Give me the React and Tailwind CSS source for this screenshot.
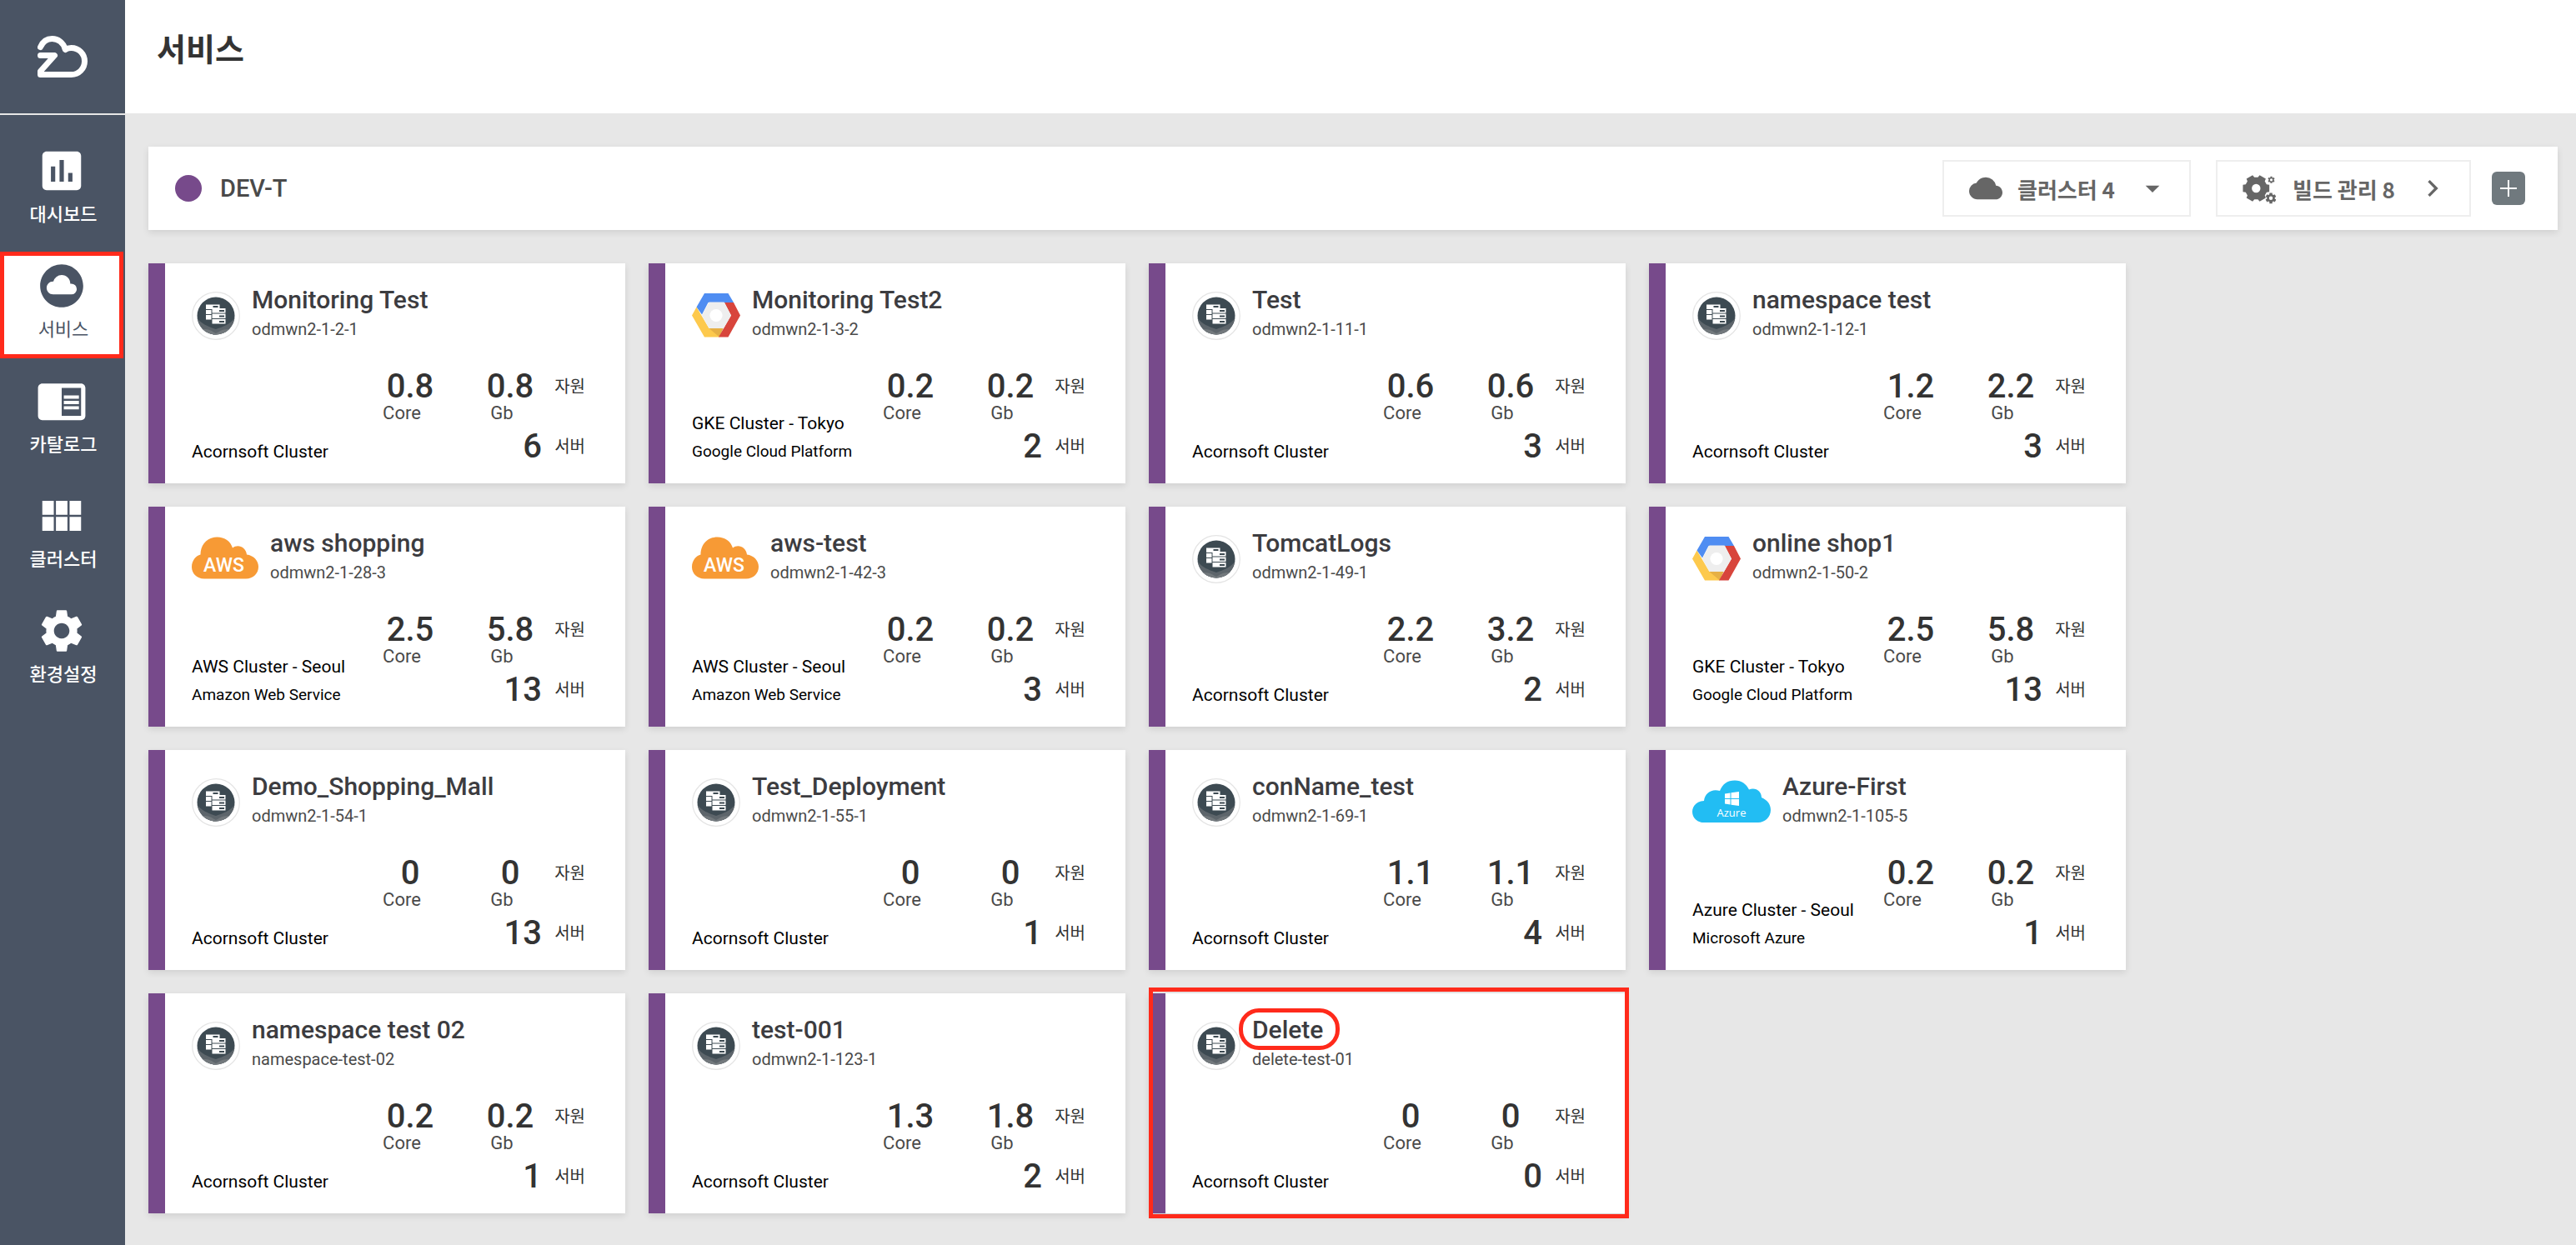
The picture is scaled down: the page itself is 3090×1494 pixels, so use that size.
import React from "react";
import {
  MdAssessment,
  MdCloudCircle,
  MdChromeReaderMode,
  MdViewModule,
  MdSettings,
  MdCloud,
  MdArrowDropDown,
  MdChevronRight,
} from "react-icons/md";

const menu = [
  { label: "대시보드", Icon: MdAssessment },
  { label: "서비스", Icon: MdCloudCircle, active: true },
  { label: "카탈로그", Icon: MdChromeReaderMode },
  { label: "클러스터", Icon: MdViewModule },
  { label: "환경설정", Icon: MdSettings },
];

const acorn = ["Acornsoft Cluster"];
const gke = ["GKE Cluster - Tokyo", "Google Cloud Platform"];
const aws = ["AWS Cluster - Seoul", "Amazon Web Service"];
const azure = ["Azure Cluster - Seoul", "Microsoft Azure"];

const services = [
  { name: "Monitoring Test", id: "odmwn2-1-2-1", kind: "server", cluster: acorn, core: "0.8", gb: "0.8", servers: 6 },
  { name: "Monitoring Test2", id: "odmwn2-1-3-2", kind: "gcp", cluster: gke, core: "0.2", gb: "0.2", servers: 2 },
  { name: "Test", id: "odmwn2-1-11-1", kind: "server", cluster: acorn, core: "0.6", gb: "0.6", servers: 3 },
  { name: "namespace test", id: "odmwn2-1-12-1", kind: "server", cluster: acorn, core: "1.2", gb: "2.2", servers: 3 },
  { name: "aws shopping", id: "odmwn2-1-28-3", kind: "aws", cluster: aws, core: "2.5", gb: "5.8", servers: 13 },
  { name: "aws-test", id: "odmwn2-1-42-3", kind: "aws", cluster: aws, core: "0.2", gb: "0.2", servers: 3 },
  { name: "TomcatLogs", id: "odmwn2-1-49-1", kind: "server", cluster: acorn, core: "2.2", gb: "3.2", servers: 2 },
  { name: "online shop1", id: "odmwn2-1-50-2", kind: "gcp", cluster: gke, core: "2.5", gb: "5.8", servers: 13 },
  { name: "Demo_Shopping_Mall", id: "odmwn2-1-54-1", kind: "server", cluster: acorn, core: "0", gb: "0", servers: 13 },
  { name: "Test_Deployment", id: "odmwn2-1-55-1", kind: "server", cluster: acorn, core: "0", gb: "0", servers: 1 },
  { name: "conName_test", id: "odmwn2-1-69-1", kind: "server", cluster: acorn, core: "1.1", gb: "1.1", servers: 4 },
  { name: "Azure-First", id: "odmwn2-1-105-5", kind: "azure", cluster: azure, core: "0.2", gb: "0.2", servers: 1 },
  { name: "namespace test 02", id: "namespace-test-02", kind: "server", cluster: acorn, core: "0.2", gb: "0.2", servers: 1 },
  { name: "test-001", id: "odmwn2-1-123-1", kind: "server", cluster: acorn, core: "1.3", gb: "1.8", servers: 2 },
  { name: "Delete", id: "delete-test-01", kind: "server", cluster: acorn, core: "0", gb: "0", servers: 0, marked: true },
];

function Logo() {
  return (
    <svg viewBox="0 0 60 50" className="h-[50px] w-[60px]" fill="none" stroke="#fff" strokeWidth="7" strokeLinecap="round" strokeLinejoin="round" aria-hidden="true">
      <path d="M3.500 13.500C6 7.500 11 3.500 17.500 3.500C25 3.500 31 8.500 33 15.500" />
      <path d="M33.500 16.500C35.500 15 38 14.500 40.500 14.500C49.500 14.500 56.500 21.500 56.500 30.500C56.500 39.500 49.500 46.500 40.500 46.500H3.500V42.500L20.500 23.500H3.500" />
    </svg>
  );
}

function ServerIcon() {
  return (
    <svg viewBox="0 0 58 58" className="size-[58px]" aria-hidden="true">
      <defs>
        <clipPath id="disc">
          <circle cx="29" cy="29" r="22.500" />
        </clipPath>
      </defs>
      <circle cx="29" cy="29" r="28.300" fill="#fff" stroke="#e4e4e4" strokeWidth="1.200" />
      <g clipPath="url(#disc)">
        <rect width="58" height="58" fill="#3d4a52" />
        <path d="M6 31C12 39 20 42 29 45C38 42 46 39 52 31V58H6Z" fill="#5d656b" />
        <path d="M14 45C22 45 25 48 29 50C33 48 36 45 44 45V58H14Z" fill="#73797d" />
      </g>
      <g fill="#fff">
        <rect x="17" y="15.500" width="16.500" height="5.500" />
        <rect x="17" y="22" width="6.500" height="5" />
        <rect x="17" y="28" width="6.500" height="5.500" />
        <rect x="24.500" y="20" width="16" height="5.500" />
        <rect x="24.500" y="26.500" width="16" height="5.500" />
        <rect x="24.500" y="33" width="16" height="5.500" />
      </g>
      <g fill="#3d4a52">
        <rect x="25.500" y="17" width="6" height="2" />
        <rect x="33" y="22" width="6" height="2" />
        <rect x="33" y="28.500" width="6" height="2" />
        <rect x="33" y="35" width="6" height="2" />
      </g>
    </svg>
  );
}

function GcpIcon() {
  return (
    <svg viewBox="0 0 58 58" className="size-[58px]" aria-hidden="true">
      <path d="M15 2H43.500L50 13H19.500L12 27.500L5.500 18.500Z" fill="#4f8df2" />
      <path d="M5.500 18.500L20.500 44H37L32.500 54.500H15L0 28.500Z" fill="#fdc94d" />
      <path d="M20.500 44H37.500L33 54.500Z" fill="#e6b045" />
      <path d="M39 13H50L58 28.500L43.500 54.500H32L47 28.500Z" fill="#d8453c" />
      <path d="M20.500 12.500H38.500L47 28.500L38 44H20.500L12 28.500Z" fill="#eeeeee" />
      <circle cx="29" cy="28.500" r="7.600" fill="#fff" />
    </svg>
  );
}

function AwsIcon() {
  return (
    <svg viewBox="0 0 80 58" className="h-[58px] w-[80px]" aria-hidden="true">
      <path d="M15 52.500C6 52.500 0 46 0 38.500C0 30.500 5 25 10.500 23.500C10.500 11 19 2.500 30.500 2.500C39.500 2.500 46.500 7.500 49 15.500C55 10.500 65 14 66 23.500C74 24.500 80 30.500 80 38C80 46 74 52.500 65 52.500Z" fill="#f79a35" />
      <text x="38.500" y="44" textAnchor="middle" fontFamily="Roboto, sans-serif" fontWeight="500" fontSize="23" fill="#fff">AWS</text>
    </svg>
  );
}

function AzureIcon() {
  return (
    <svg viewBox="0 0 94 58" className="h-[58px] w-[94px]" aria-hidden="true">
      <path d="M14 53C6 53 0 47.500 0 40C0 32.500 6 27.500 14 27C15 17 24 12 33 15C36 7 42 2.500 51 2.500C59 2.500 65 7 68 13.500C76 10.500 83 15.500 83 23C90 26 94 31 94 38C94 46.500 87 53 79 53Z" fill="#22bdf3" />
      <g fill="#fff">
        <path d="M39 18.500L45.500 17.500V24H39Z" />
        <path d="M46.500 17.300L56 16V24H46.500Z" />
        <path d="M39 25H45.500V31.500L39 30.500Z" />
        <path d="M46.500 25H56V33L46.500 31.700Z" />
      </g>
      <text x="47" y="46" textAnchor="middle" fontFamily="Open Sans, sans-serif" fontSize="13" fill="#fff">Azure</text>
    </svg>
  );
}

const kindIcons = { server: ServerIcon, gcp: GcpIcon, aws: AwsIcon, azure: AzureIcon };

/* Outline of a six-toothed wheel with a round hole */
function wheel(cx, cy, outer, inner, hole, turn) {
  const points = [];
  for (let i = 0; i < 6; i += 1) {
    const base = turn + i * 60;
    [[-21, inner], [-15, outer], [15, outer], [21, inner]].forEach(([offset, radius]) => {
      const angle = ((base + offset) * Math.PI) / 180;
      points.push(`${(cx + radius * Math.cos(angle)).toFixed(2)} ${(cy + radius * Math.sin(angle)).toFixed(2)}`);
    });
  }
  return `M${points.join("L")}ZM${cx - hole} ${cy}a${hole} ${hole} 0 1 0 ${hole * 2} 0a${hole} ${hole} 0 1 0 ${-hole * 2} 0Z`;
}

function GearsIcon() {
  return (
    <svg viewBox="0 0 40 40" className="size-10 shrink-0" fill="currentColor" fillRule="evenodd" aria-hidden="true">
      <path d={wheel(16.3, 20, 16.4, 13.4, 5.2, 0)} />
      <path d={wheel(34.5, 9.8, 4.2, 3.1, 1.6, 30)} />
      <path d={wheel(34, 31.8, 6.6, 4.8, 2.2, 30)} />
    </svg>
  );
}

function Sidebar() {
  return (
    <aside className="flex w-[150px] shrink-0 flex-col bg-[#4a5464]">
      <a href="#home" aria-label="Home" className="flex h-[138px] items-center justify-center border-b-2 border-[#e7e7e7]">
        <Logo />
      </a>
      <nav className="mr-0.5 mt-[26px] flex flex-col gap-2.5">
        {menu.map(({ label, Icon, active }) => (
          <a
            key={label}
            href={`#${label}`}
            aria-current={active ? "page" : undefined}
            className={
              active
                ? "relative flex h-32 flex-col items-center bg-white pt-2.5 text-[#4a5464]"
                : "flex h-32 flex-col items-center pt-2.5 font-medium text-white"
            }
          >
            <Icon className="size-[62px]" />
            <span className="mt-1.5 pl-1 text-[22px] leading-8">{label}</span>
            {active && <span className="pointer-events-none absolute inset-0 border-5 border-[#ff2a1b]" />}
          </a>
        ))}
      </nav>
    </aside>
  );
}

function Toolbar() {
  return (
    <section className="flex h-[100px] items-center bg-white pl-8 pr-[39px] shadow-[0_3px_8px_rgba(0,0,0,0.1)]">
      <span className="size-8 rounded-full bg-[#774a8b]" />
      <h2 className="ml-[22px] flex-1 text-[29px] font-medium leading-9 text-[#4a4a4a]">DEV-T</h2>
      <div className="flex items-center font-['Noto_Sans_CJK_KR',sans-serif] text-[26px] font-bold text-[#666]">
        <label className="flex h-[68px] w-[298px] items-center border-2 border-[#eee] pl-[30px] pr-6">
          <MdCloud className="size-10 shrink-0" />
          <select aria-label="클러스터" className="ml-[18px] min-w-0 flex-1 appearance-none bg-transparent">
            <option>클러스터 4</option>
          </select>
          <MdArrowDropDown className="size-10 shrink-0" />
        </label>
        <button type="button" className="ml-[30px] flex h-[68px] w-[306px] items-center border-2 border-[#eee] pl-[30px] pr-6">
          <GearsIcon />
          <span className="ml-5 flex-1 text-left">빌드 관리 8</span>
          <MdChevronRight className="size-10 shrink-0" />
        </button>
        <button type="button" aria-label="추가" className="ml-[25px] flex size-10 items-center justify-center rounded-md bg-[#70797e]">
          <svg viewBox="0 0 20 20" className="size-5" stroke="#fff" strokeWidth="2" aria-hidden="true">
            <path d="M10 0V20M0 10H20" />
          </svg>
        </button>
      </div>
    </section>
  );
}

function ServiceCard({ service }) {
  const Icon = kindIcons[service.kind];
  return (
    <article className="relative border-l-20 border-[#774a8b] bg-white pb-6 pl-8 pr-12 pt-[26px] shadow-[0_3px_8px_rgba(0,0,0,0.1)]">
      <header className="flex items-end gap-3.5">
        <Icon />
        <div>
          <h3 className="relative w-fit text-[30px] font-medium leading-9 text-[#3c3c40]">
            {service.name}
            {service.marked && (
              <span className="pointer-events-none absolute -bottom-1.5 -left-4 -right-5 -top-2 rounded-[24px] border-5 border-[#ff2a1b]" />
            )}
          </h3>
          <p className="mt-1 text-[20px] leading-[26px] text-[#4a4a4a]">{service.id}</p>
        </div>
      </header>
      <div className="mt-9 flex items-end justify-between">
        <div className="flex w-0 flex-col gap-1.5 whitespace-nowrap text-[21px] leading-7 text-black">
          <p>{service.cluster[0]}</p>
          {service.cluster[1] && <p className="text-[19px]">{service.cluster[1]}</p>}
        </div>
        <dl className="grid grid-cols-[120px_120px_40px] text-[#333]">
          <dd className="pl-5 text-center text-[40px] font-medium leading-10">{service.core}</dd>
          <dd className="pl-5 text-center text-[40px] font-medium leading-10">{service.gb}</dd>
          <dt className="row-span-2 text-right text-[20px] leading-10">자원</dt>
          <dd className="text-center text-[22px] leading-6 text-[#4a4a4a]">Core</dd>
          <dd className="text-center text-[22px] leading-6 text-[#4a4a4a]">Gb</dd>
          <dd className="col-span-2 pr-3 pt-2 text-right text-[40px] font-medium leading-10">{service.servers}</dd>
          <dt className="pt-2 text-right text-[20px] leading-10">서버</dt>
        </dl>
      </div>
      {service.marked && (
        <span className="pointer-events-none absolute -bottom-1.5 -left-5 -right-1 -top-[7px] border-5 border-[#ff2a1b]" />
      )}
    </article>
  );
}

export default function App() {
  return (
    <div className="flex min-h-screen bg-[#e7e7e7] font-['Roboto','Noto_Sans_CJK_KR',sans-serif]">
      <Sidebar />
      <div className="min-w-0 flex-1">
        <header className="h-[136px] bg-white px-[38px] pt-9">
          <h1 className="text-[38px] font-bold leading-[48px] text-[#333]">서비스</h1>
        </header>
        <main className="pb-7 pl-7 pr-[22px] pt-10">
          <Toolbar />
          <div className="mt-10 grid grid-cols-[repeat(auto-fill,572px)] gap-7">
            {services.map((service) => (
              <ServiceCard key={service.name} service={service} />
            ))}
          </div>
        </main>
      </div>
    </div>
  );
}
